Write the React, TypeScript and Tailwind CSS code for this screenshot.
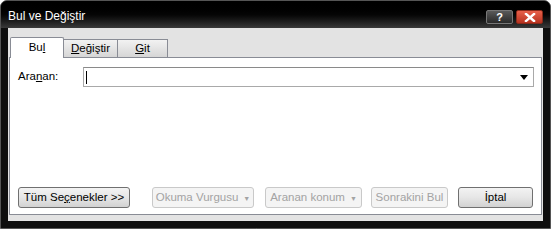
import React from "react";

const font = { fontFamily: '"Liberation Sans", Arial, sans-serif' };

function Btn({ children, disabled, w, arrow }: { children: React.ReactNode; disabled?: boolean; w: string; arrow?: boolean }) {
  return (
    <div
      className={`${w} h-[21px] flex items-center justify-center gap-[5px] rounded-[3px] text-[11.5px] border ${
        disabled
          ? "border-[#c9c9c9] bg-[#f4f4f4] text-[#a3a3a3]"
          : "border-[#707070] bg-gradient-to-b from-[#f3f3f3] via-[#e6e6e6] to-[#d2d2d2] text-black"
      }`}
    >
      <span>{children}</span>
      {arrow && <span className="text-[7px] leading-none mt-[1px]">▼</span>}
    </div>
  );
}

export default function App() {
  return (
    <div className="w-[551px] h-[229px] bg-[#0e0e0e] rounded-t-[7px] flex flex-col overflow-hidden border border-[#555]" style={font}>
      {/* title bar */}
      <div className="h-[27px] flex items-center pl-[7px] pr-[7px] bg-gradient-to-b from-[#000] via-[#050505] to-[#3a3a3a] shrink-0">
        <span className="text-white text-[12px] mt-[3px]">Bul ve Değiştir</span>
        <div className="ml-auto flex gap-[3px] mt-[5px]">
          <div className="w-[27px] h-[14px] rounded-[2px] bg-gradient-to-b from-[#5a5a5a] to-[#2a2a2a] border border-[#777] flex items-center justify-center text-white text-[11px] font-bold leading-none">?</div>
          <div className="w-[27px] h-[14px] rounded-[2px] bg-gradient-to-b from-[#e8604a] to-[#b8321f] border border-[#8a2a1a] flex items-center justify-center">
            <svg width="12" height="9" viewBox="0 0 12 9">
              <path d="M2 1 L10 8 M10 1 L2 8" stroke="white" strokeWidth="2.4" strokeLinecap="square" />
            </svg>
          </div>
        </div>
      </div>

      {/* body */}
      <div className="mx-[7px] mb-[7px] flex-1 bg-[#e3e3e3] pt-[9px] pl-[1px] pr-[1px] pb-[6px] flex flex-col">
        {/* tabs */}
        <div className="flex items-end h-[20px] pl-[1px] text-[11.5px]">
          <div className="w-[54px] h-[21px] bg-white border border-b-0 border-[#898c95] rounded-t-[2px] flex items-center justify-center relative z-10 translate-y-[1px]">
            Bu<span className="underline">l</span>
          </div>
          <div className="w-[54px] h-[18px] bg-gradient-to-b from-[#f2f2f2] to-[#d6d6d6] border border-b-0 border-l-0 border-[#898c95] flex items-center justify-center">
            <span className="underline">D</span>eğiştir
          </div>
          <div className="w-[50px] h-[18px] bg-gradient-to-b from-[#f2f2f2] to-[#d6d6d6] border border-b-0 border-l-0 border-[#898c95] flex items-center justify-center">
            <span className="underline">G</span>it
          </div>
        </div>

        {/* panel */}
        <div className="flex-1 bg-white border border-[#898c95] flex flex-col pl-[8px] pr-[7px] pt-[9px] pb-[6px]">
          <div className="flex items-center text-[11.5px]">
            <span className="w-[65px]">
              Ara<span className="underline">n</span>an:
            </span>
            <div className="flex-1 h-[20px] border border-[#a9a9a9] border-t-[#8a8a8a] flex items-center pl-[2px] pr-[5px]">
              <div className="w-[1px] h-[13px] bg-black" />
              <svg className="ml-auto" width="8" height="5" viewBox="0 0 8 5">
                <path d="M0 0 H8 L4 5 Z" fill="black" />
              </svg>
            </div>
          </div>

          <div className="mt-auto flex items-center">
            <Btn w="w-[112px]">
              Tüm Se<span className="underline">ç</span>enekler &gt;&gt;
            </Btn>
            <div className="w-[22px]" />
            <Btn w="w-[102px]" disabled arrow>Okuma Vurgusu</Btn>
            <div className="w-[11px]" />
            <Btn w="w-[97px]" disabled arrow>Aranan konum</Btn>
            <div className="w-[9px]" />
            <Btn w="w-[77px]" disabled>Sonrakini Bul</Btn>
            <div className="w-[10px]" />
            <Btn w="w-[75px]">İptal</Btn>
          </div>
        </div>
      </div>
    </div>
  );
}
